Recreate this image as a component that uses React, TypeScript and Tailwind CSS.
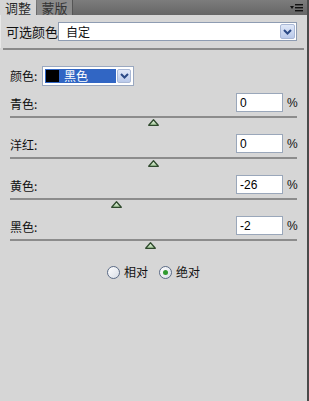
import React from 'react'

const FONT = { fontFamily: '"Noto Sans CJK SC", "Liberation Sans", sans-serif' }

type Row = { label: string; value: number }

const ROWS: Row[] = [
  { label: '青色:', value: 0 },
  { label: '洋红:', value: 0 },
  { label: '黄色:', value: -26 },
  { label: '黑色:', value: -2 },
]

function Chevron() {
  return (
    <svg width="9" height="6" viewBox="0 0 9 6">
      <polyline points="1,1 4.5,4.5 8,1" fill="none" stroke="#2b4a86" strokeWidth="2" />
    </svg>
  )
}

function Thumb() {
  return (
    <svg width="11" height="7" viewBox="0 0 11 7">
      <defs>
        <linearGradient id="tg" x1="0" y1="0" x2="0" y2="1">
          <stop offset="0" stopColor="#f4fbf0" />
          <stop offset="1" stopColor="#9fc795" />
        </linearGradient>
      </defs>
      <polygon points="5.5,0.8 10.3,6.3 0.7,6.3" fill="url(#tg)" stroke="#2f4a2d" strokeWidth="1.3" strokeLinejoin="round" />
    </svg>
  )
}

function SliderRow({ label, value }: Row) {
  // track spans 287px, 0 sits in the middle
  const left = 143.5 + (value / 100) * 143 - 5.5
  return (
    <div className="flex flex-col">
      <div className="flex h-[19px] items-center">
        <span className="flex-1 pl-[10px] pt-[3px] text-[12px] text-[#111]">{label}</span>
        <div className="flex h-[19px] w-[47px] items-center border border-[#9aa7ba] bg-white pl-[3px] text-[12px] text-black" style={{ fontFamily: '"Liberation Sans", sans-serif' }}>
          {value}
        </div>
        <span className="w-[24px] pl-[4px] text-[12px] text-[#111]" style={{ fontFamily: '"Liberation Sans", sans-serif' }}>%</span>
      </div>
      <div className="relative ml-[10px] mt-[4px] h-[2px] w-[287px] bg-[#8c8c8c]">
        <div className="absolute top-[3px]" style={{ left }}>
          <Thumb />
        </div>
      </div>
      <div className="h-[16px]" />
    </div>
  )
}

function Radio({ checked, label }: { checked?: boolean; label: string }) {
  return (
    <div className="flex items-center gap-[4px]">
      <div className="flex h-[13px] w-[13px] items-center justify-center rounded-full border border-[#5b6b86] bg-gradient-to-br from-white to-[#d8dde6]">
        {checked && <div className="h-[5px] w-[5px] rounded-full bg-[#2f9a2f]" />}
      </div>
      <span className="text-[12px] text-[#111]">{label}</span>
    </div>
  )
}

export default function App() {
  return (
    <div className="flex h-[401px] w-[309px] flex-col border-r-2 border-[#4a4a4a] bg-[#d6d6d6]" style={FONT}>
      {/* tabs */}
      <div className="flex h-[15px] items-stretch bg-gradient-to-b from-[#7c7c7c] to-[#666]">
        <div className="w-[36px] bg-[#d6d6d6] text-center text-[13px] leading-[15px] text-[#2a2a2a]">调整</div>
        <div className="ml-[1px] w-[36px] border-r border-[#555] bg-[#8c8c8c] text-center text-[13px] leading-[15px] text-[#333]">蒙版</div>
        <div className="ml-auto mr-[3px] flex items-center">
          <svg width="14" height="9" viewBox="0 0 14 9">
            <polygon points="0,3 4,3 2,6" fill="#111" />
            <rect x="5" y="1" width="8" height="1.4" fill="#111" />
            <rect x="5" y="4" width="8" height="1.4" fill="#111" />
            <rect x="5" y="7" width="8" height="1.4" fill="#111" />
          </svg>
        </div>
      </div>

      {/* preset row */}
      <div className="flex h-[33px] items-center border-l border-[#e8e8e8]">
        <span className="w-[57px] pl-[5px] text-[13px] text-[#111]">可选颜色</span>
        <div className="flex h-[19px] w-[239px] items-center border border-[#8e9cb2] bg-white">
          <span className="flex-1 pl-[7px] text-[12px] text-[#111]">自定</span>
          <div className="mr-[1px] flex h-[15px] w-[15px] items-center justify-center rounded-[2px] border border-[#a9b8d6] bg-gradient-to-b from-[#e0e8f8] to-[#b9c9ea]">
            <Chevron />
          </div>
        </div>
      </div>
      <div className="mx-[3px] h-[2px] bg-[#8a8a8a]" />

      {/* colour picker */}
      <div className="mt-[16px] flex h-[20px] items-center">
        <span className="w-[42px] pl-[10px] text-[12px] text-[#111]">颜色:</span>
        <div className="flex h-[20px] w-[92px] items-center border border-[#9aa8c0] bg-white p-[2px]">
          <div className="flex h-full w-[71px] items-center bg-[#3166c4]">
            <div className="h-full w-[15px] border border-[#3166c4] bg-black" />
            <span className="pl-[4px] text-[12px] leading-none text-white">黑色</span>
          </div>
          <div className="ml-[1px] flex h-full flex-1 items-center justify-center rounded-[2px] border border-[#a9b8d6] bg-gradient-to-b from-[#e0e8f8] to-[#b9c9ea]">
            <Chevron />
          </div>
        </div>
      </div>

      <div className="mt-[7px] flex flex-col">
        {ROWS.map(r => (
          <SliderRow key={r.label} label={r.label} value={r.value} />
        ))}
      </div>

      <div className="mt-[6px] flex items-center justify-center gap-[11px]">
        <Radio label="相对" />
        <Radio checked label="绝对" />
      </div>
    </div>
  )
}
